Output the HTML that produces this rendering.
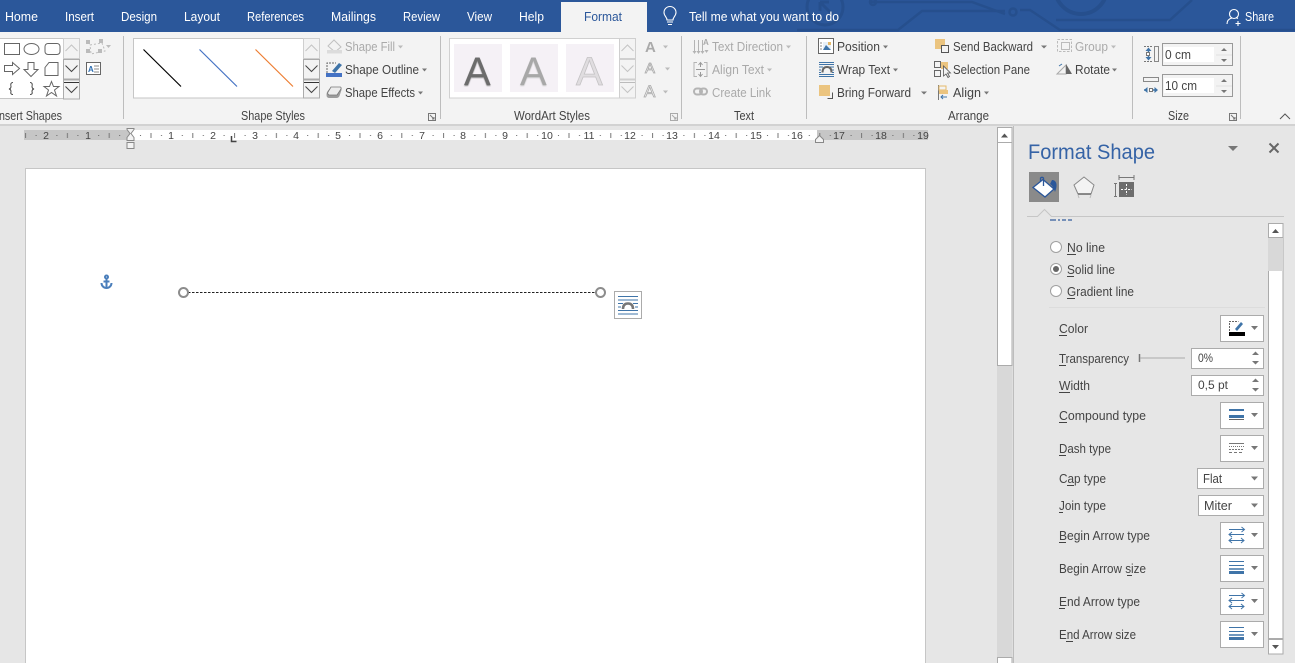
<!DOCTYPE html>
<html><head><meta charset="utf-8"><title>Format Shape</title>
<style>
html,body{margin:0;padding:0;width:1295px;height:663px;overflow:hidden;background:#e6e6e6}
svg{display:block;font-family:"Liberation Sans",sans-serif}
text{font-size:12.5px;fill:#444;white-space:pre}
.t{font-size:13px;fill:#fff}
.g{fill:#aaa}
.r{font-size:10.500px;fill:#444;text-anchor:middle}
.u{stroke:#444;stroke-width:1}
.n{fill:none;stroke:#666;stroke-width:1}
.cp{fill:#777}
.cd{fill:#bbb}
.sep{stroke:#bdbdbd;stroke-width:1}
</style></head><body>
<svg width="1295" height="663" viewBox="0 0 1295 663" xmlns="http://www.w3.org/2000/svg">
<defs>
<pattern id="rt" x="0" y="0" width="41.8" height="20" patternUnits="userSpaceOnUse" patternTransform="translate(130,130)">
<rect x="10" y="5" width="1" height="1" fill="#666"/><rect x="20.500" y="3" width="1" height="5" fill="#777"/><rect x="31" y="5" width="1" height="1" fill="#666"/>
</pattern>
<g id="btn"><rect x=".5" y=".5" width="43" height="26" fill="#fff" stroke="#ababab"/><path d="M31 11h7l-3.500 4z" fill="#777"/></g>
<g id="spin"><path d="M0 3l3.500-3.500 3.500 3.500zM0 9l3.500 3.500 3.500-3.500z" fill="#777"/></g>
<g id="sz"><path d="M9 6.500h15M9 10.500h15" stroke="#3f74a8"/><path d="M9 14h15" stroke="#3f74a8" stroke-width="1.500"/><path d="M9 17.500h15" stroke="#3f74a8" stroke-width="3"/></g>
<g id="arr" fill="none" stroke="#3f74a8"><path d="M9 7.500h15M21.500 5l3 2.500-3 2.500"/><path d="M9 12.500h15M12 10l-3 2.500 3 2.500"/><path d="M9 18.500h15M12 16l-3 2.500 3 2.500M21 16l3 2.500-3 2.500"/></g>
<filter id="bl" x="-20%" y="-20%" width="140%" height="140%"><feGaussianBlur stdDeviation=".5"/></filter>
</defs>

<!-- title bar -->
<rect width="1295" height="32" fill="#2b579a"/>
<g fill="none" stroke="#264f8d" stroke-width="2.500">
<path d="M797 30H898L922 11H1005"/>
<path d="M870 2H972L1005 14"/>
<circle cx="825" cy="7" r="18" stroke-width="3"/>
<path d="M820 2L832 14M820 2h9M820 2v9" stroke-width="3"/>
<path d="M1020 10H1030L1060 30H1295"/>
<circle cx="1081" cy="-12" r="26" stroke-width="4"/>
<path d="M1056 20H1170L1192 0"/>
<circle cx="1013" cy="12" r="3.500"/>
<circle cx="873" cy="2" r="3"/>
</g>
<text class="t" x="5" y="21" textLength="33" lengthAdjust="spacingAndGlyphs">Home</text>
<text class="t" x="65" y="21" textLength="29" lengthAdjust="spacingAndGlyphs">Insert</text>
<text class="t" x="121" y="21" textLength="36" lengthAdjust="spacingAndGlyphs">Design</text>
<text class="t" x="184" y="21" textLength="36" lengthAdjust="spacingAndGlyphs">Layout</text>
<text class="t" x="247" y="21" textLength="57" lengthAdjust="spacingAndGlyphs">References</text>
<text class="t" x="331" y="21" textLength="45" lengthAdjust="spacingAndGlyphs">Mailings</text>
<text class="t" x="403" y="21" textLength="37" lengthAdjust="spacingAndGlyphs">Review</text>
<text class="t" x="467" y="21" textLength="25" lengthAdjust="spacingAndGlyphs">View</text>
<text class="t" x="519" y="21" textLength="25" lengthAdjust="spacingAndGlyphs">Help</text>
<rect x="561" y="2" width="86" height="31" fill="#f3f3f3"/>
<text class="t" x="584" y="21" textLength="38" lengthAdjust="spacingAndGlyphs" style="fill:#2b579a">Format</text>
<g fill="none" stroke="#fff" stroke-width="1.100"><path d="M667 20c0-3-3-4-3-7.500a6 6 0 0 1 12 0c0 3.500-3 4.500-3 7.500z"/><path d="M667 22h6M668 24.500h4"/></g>
<text class="t" x="689" y="21" textLength="150" lengthAdjust="spacingAndGlyphs">Tell me what you want to do</text>
<g fill="none" stroke="#fff" stroke-width="1.100"><circle cx="1234" cy="14" r="4.500"/><path d="M1227 24c0-4 3-5.500 5-6M1236 17.500l2 1"/><path d="M1238 21v5M1235.500 23.500h5"/></g>
<text class="t" x="1245" y="21" textLength="29" lengthAdjust="spacingAndGlyphs">Share</text>

<!-- ribbon -->
<rect y="32" width="1295" height="92" fill="#f3f3f3"/>
<rect y="124" width="1295" height="2" fill="#d2d2d2"/>
<path class="sep" d="M123.500 36v83M440.500 36v83M681.500 36v83M806.500 36v83M1132.500 36v83M1240.500 36v83"/>

<!-- shapes gallery -->
<rect x="-2" y="38.500" width="65.500" height="60" fill="#fff" stroke="#c6c6c6"/>
<g class="n">
<rect x="4.500" y="43.500" width="15" height="11"/>
<ellipse cx="31.500" cy="49" rx="7.500" ry="5.500"/>
<rect x="45" y="43.500" width="15" height="11" rx="3"/>
<path d="M4.500 65.500h8v-3l7 6-7 6v-3h-8z"/>
<path d="M28 62.500h6v7h4l-7 7-7-7h4z"/>
<path d="M49 62.500h9v13h-13v-8z"/>
<path d="M13 82.500q-3 0-2 4q0 2-2 2.500q2 .5 2 2.500q-1 3 2 3" stroke="#444"/>
<path d="M30 82.500q3 0 2 4q0 2 2 2.500q-2 .5-2 2.500q1 3-2 3" stroke="#444"/>
<path d="M51.500 81.500l2 5h5.500l-4.500 3.500 2 6-5-3.500-5 3.500 2-6-4.500-3.500h5.500z"/>
</g>
<g stroke="#ababab" fill="#f3f3f3"><rect x="63.500" y="38.500" width="16" height="20" stroke="#cfcfcf"/><rect x="63.500" y="59.500" width="16" height="19.500"/><rect x="63.500" y="80" width="16" height="19"/></g>
<path d="M65.500 51l6-6 6 6" fill="none" stroke="#c4c4c4"/><path d="M65.500 65.500l6 6 6-6" fill="none" stroke="#444"/><path d="M64 82.500h15" stroke="#333"/><path d="M65.500 86.500l6 6 6-6" fill="none" stroke="#444"/>
<g fill="none" stroke="#bbb"><path d="M90 45l12-2 3 8-14 3z" stroke-dasharray="2 2"/></g>
<g fill="#bbb"><rect x="86" y="40" width="4" height="4"/><rect x="99" y="39" width="4" height="4"/><rect x="86" y="49" width="4" height="4"/><rect x="98" y="49" width="4" height="4"/></g>
<path d="M106 45h5l-2.500 3z" class="cd"/>
<rect x="86.500" y="62.500" width="14" height="12" fill="#fff" stroke="#666"/><text x="88" y="72" style="font-size:8px;font-weight:bold;fill:#2b6cb0">A</text><path d="M94 66h5M94 69h5M94 72h5" stroke="#888"/>
<text x="-4" y="120" textLength="66" lengthAdjust="spacingAndGlyphs">Insert Shapes</text>

<!-- shape styles -->
<rect x="133.500" y="38.500" width="170" height="59.500" fill="#fff" stroke="#c6c6c6"/>
<path d="M143.500 49.500l37.500 37" stroke="#000" stroke-width="1.200"/>
<path d="M199.500 49.500l37.500 37" stroke="#4472c4" stroke-width="1.200"/>
<path d="M255.500 49.500l37.500 37" stroke="#ed7d31" stroke-width="1.200"/>
<g stroke="#ababab" fill="#f3f3f3"><rect x="303.500" y="38.500" width="16" height="20" stroke="#cfcfcf"/><rect x="303.500" y="59.500" width="16" height="19.500"/><rect x="303.500" y="80" width="16" height="18"/></g>
<path d="M305.500 51l6-6 6 6" fill="none" stroke="#c4c4c4"/><path d="M305.500 65.500l6 6 6-6" fill="none" stroke="#444"/><path d="M304 82.500h15" stroke="#333"/><path d="M305.500 86.500l6 6 6-6" fill="none" stroke="#444"/>
<path d="M328 46l6-6 7 7-6 5z" fill="#f3f3f3" stroke="#c0c0c0"/><rect x="327" y="50" width="15" height="3.500" fill="#dcdcdc"/>
<text class="g" x="345" y="51" textLength="50" lengthAdjust="spacingAndGlyphs">Shape Fill</text><path d="M398 45.500h5l-2.500 3z" class="cd"/>
<path d="M327 73v-10h9" fill="none" stroke="#666" stroke-dasharray="2 1"/><path d="M332 71l7-8 3 2-7 8z" fill="#3f74a8"/><rect x="326" y="73" width="16" height="4" fill="#4472c4"/>
<text x="345" y="74" textLength="74" lengthAdjust="spacingAndGlyphs">Shape Outline</text><path d="M422 68.500h5l-2.500 3z" class="cp"/>
<path d="M331 87h9q2 0 1.500 3l-2 6q-1 2-3 2h-7q-3 0-3-3t2-5z" fill="#9c9c9c"/><path d="M331 87h9q1.500 0 1 2l-4 6h-8q-2-1-1-3z" fill="#ececec" stroke="#777" stroke-width=".8"/>
<text x="345" y="97" textLength="70" lengthAdjust="spacingAndGlyphs">Shape Effects</text><path d="M418 91.500h5l-2.500 3z" class="cp"/>
<text x="241" y="120" textLength="64" lengthAdjust="spacingAndGlyphs">Shape Styles</text>
<path d="M428.500 113.500h7v7h-7zM430 115l4 4M434 117v2h-2" fill="none" stroke="#777"/>

<!-- wordart -->
<rect x="449.500" y="38.500" width="170" height="59.500" fill="#fff" stroke="#d0d0d0"/>
<rect x="454" y="44" width="48" height="48" fill="#f5f1f6"/><rect x="510" y="44" width="48" height="48" fill="#f5f1f6"/><rect x="566" y="44" width="48" height="48" fill="#f5f1f6"/>
<text x="464" y="85" style="font-size:40px;fill:#888" filter="url(#bl)" transform="translate(0,1)">A</text>
<text x="464" y="85" style="font-size:40px;fill:#6c6c6c">A</text>
<text x="520" y="85" style="font-size:40px;fill:#c2c2c2" filter="url(#bl)" transform="translate(0,1)">A</text>
<text x="520" y="85" style="font-size:40px;fill:#a8a8a8">A</text>
<text x="576" y="85" style="font-size:40px;fill:#e0dde0;stroke:#c4c2c4;stroke-width:.8">A</text>
<g stroke="#cfcfcf" fill="#f3f3f3"><rect x="619.500" y="38.500" width="16" height="20"/><rect x="619.500" y="59.500" width="16" height="19.500"/><rect x="619.500" y="80" width="16" height="18"/></g>
<path d="M621.500 51l6-6 6 6M621.500 65.500l6 6 6-6M621.500 86.500l6 6 6-6" fill="none" stroke="#c4c4c4"/><path d="M620 82.500h15" stroke="#bbb"/>
<text x="645" y="52" style="font-size:15px;font-weight:bold;fill:#aaa">A</text><path d="M663 45.500h5l-2.500 3z" class="cd"/>
<text x="645" y="73" style="font-size:15px;fill:#f3f3f3;stroke:#aaa;stroke-width:.8">A</text><path d="M665 67.500h5l-2.500 3z" class="cd"/>
<text x="644" y="97" style="font-size:17px;fill:#f3f3f3;stroke:#aaa;stroke-width:.8">A</text><path d="M663 90.500h5l-2.500 3z" class="cd"/>
<text x="514" y="120" textLength="76" lengthAdjust="spacingAndGlyphs">WordArt Styles</text>
<path d="M670.500 113.500h7v7h-7zM672 115l4 4M676 117v2h-2" fill="none" stroke="#aaa"/>

<!-- text -->
<g stroke="#b4b4b4" fill="none"><path d="M694.500 40v12M698.500 40v12M702.500 40v12"/></g>
<text x="703" y="45" style="font-size:8px;font-weight:bold;fill:#aaa">A</text>
<path d="M692.500 51l2 3 2-3zM696.500 51l2 3 2-3zM700.500 51l2 3 2-3zM704.500 50l2 3 2-3z" fill="#b4b4b4"/>
<text class="g" x="712" y="51" textLength="71" lengthAdjust="spacingAndGlyphs">Text Direction</text><path d="M786 45.500h5l-2.500 3z" class="cd"/>
<path d="M697 62.500h-3v14h3M704 62.500h3v14h-3" fill="none" stroke="#b4b4b4"/><path d="M700.500 63v4M700.500 72v4M698.500 65l2-2.500 2 2.500M698.500 74l2 2.500 2-2.500M696 69.500h9" fill="none" stroke="#999"/>
<text class="g" x="712" y="74" textLength="52" lengthAdjust="spacingAndGlyphs">Align Text</text><path d="M767 68.500h5l-2.500 3z" class="cd"/>
<rect x="694" y="88.500" width="8" height="6" rx="3" fill="none" stroke="#b4b4b4" stroke-width="2"/><rect x="700" y="88.500" width="7" height="6" rx="3" fill="none" stroke="#b4b4b4" stroke-width="2"/>
<text class="g" x="712" y="97" textLength="59" lengthAdjust="spacingAndGlyphs">Create Link</text>
<text x="734" y="120" textLength="20" lengthAdjust="spacingAndGlyphs">Text</text>

<!-- arrange -->
<rect x="818.500" y="38.500" width="15" height="15" fill="#fff" stroke="#666"/><rect x="823" y="42" width="8" height="8" fill="#e8f0f8"/><path d="M823 50l3-5 5 5z" fill="#3f74a8"/><rect x="828" y="42" width="3" height="3" fill="#e5b969"/><path d="M820 43h2M820 46h2M820 49h2" stroke="#888"/>
<text x="837" y="51" textLength="43" lengthAdjust="spacingAndGlyphs">Position</text><path d="M883 45.500h5l-2.500 3z" class="cp"/>
<path d="M819 62.500h15M819 64.500h15M819 74.500h15M819 76.500h15M819 67h4M830 67h4M819 70h2M832 70h2M819 72.500h2M832 72.500h2" stroke="#3f74a8"/><path d="M822.500 72.500q0-5.500 4.500-5.500t4.500 5.500" fill="none" stroke="#666" stroke-width="2"/>
<text x="837" y="74" textLength="53" lengthAdjust="spacingAndGlyphs">Wrap Text</text><path d="M893 68.500h5l-2.500 3z" class="cp"/>
<rect x="819" y="85" width="11" height="11" fill="#ebc47f"/><path d="M832.500 92.500v6h-5" fill="none" stroke="#555"/>
<text x="837" y="97" textLength="74" lengthAdjust="spacingAndGlyphs">Bring Forward</text><path d="M921 91.500h6l-3 3z" class="cp"/>
<rect x="935" y="39" width="10" height="10" fill="#ebc47f"/><rect x="941.500" y="45.500" width="7" height="7" fill="#f3f3f3" stroke="#555"/>
<text x="953" y="51" textLength="80" lengthAdjust="spacingAndGlyphs">Send Backward</text><path d="M1041 45.500h6l-3 3z" class="cp"/>
<rect x="934.500" y="61.500" width="6" height="6" fill="none" stroke="#666"/><rect x="934.500" y="70.500" width="6" height="6" fill="none" stroke="#666"/><rect x="941" y="62" width="7" height="7" fill="#ebc47f"/><path d="M943.500 66v10l2.500-2 2 3.500 1.500-1-2-3.500h3z" fill="#f3f3f3" stroke="#555" stroke-width=".8"/>
<text x="953" y="74" textLength="77" lengthAdjust="spacingAndGlyphs">Selection Pane</text>
<path d="M938.500 85v15" stroke="#777"/><rect x="939" y="86" width="7" height="4" fill="#f3f3f3" stroke="#e5b969"/><rect x="939" y="90" width="9" height="4" fill="#ebc47f"/><path d="M947 97h-6M943 95l-2 2 2 2" fill="none" stroke="#3f74a8"/>
<text x="953" y="97" textLength="28" lengthAdjust="spacingAndGlyphs">Align</text><path d="M984 91.500h5l-2.500 3z" class="cp"/>
<rect x="1057.500" y="39.500" width="14" height="12" fill="none" stroke="#bbb" stroke-dasharray="2.500 1.500"/><rect x="1061.500" y="42.500" width="8" height="7" fill="none" stroke="#bbb"/>
<text class="g" x="1075" y="51" textLength="33" lengthAdjust="spacingAndGlyphs">Group</text><path d="M1111 45.500h5l-2.500 3z" class="cd"/>
<path d="M1057 74l9-9v9z" fill="none" stroke="#aaa"/><path d="M1066 64l6 10h-6z" fill="#666"/><path d="M1059 66l3-2" stroke="#3f74a8"/>
<text x="1075" y="74" textLength="35" lengthAdjust="spacingAndGlyphs">Rotate</text><path d="M1112 68.500h5l-2.500 3z" class="cp"/>
<text x="948" y="120" textLength="41" lengthAdjust="spacingAndGlyphs">Arrange</text>

<!-- size -->
<rect x="1154.500" y="46.500" width="4" height="15" fill="#f3f3f3" stroke="#888"/>
<path d="M1144 46.500h8M1144 61.500h8" stroke="#777" stroke-dasharray="2 1"/><path d="M1145.500 51l3-3.500 3 3.500zM1145.500 57l3 3.500 3-3.500z" fill="#3f74a8"/><path d="M1148.500 50v8" stroke="#3f74a8" stroke-width="1.500"/><rect x="1146.500" y="52.500" width="3" height="3" fill="#fff" stroke="#777"/>
<rect x="1162.500" y="43.500" width="70" height="22" fill="#f3f3f3" stroke="#999"/><rect x="1164" y="47" width="50" height="15" fill="#fff"/>
<text x="1165" y="59" textLength="26" lengthAdjust="spacingAndGlyphs">0 cm</text>
<path d="M1221 51h6l-3-3zM1221 59h6l-3 3z" class="cp"/><path d="M1216 55h16" stroke="#e0e0e0"/>
<rect x="1143.500" y="77.500" width="15" height="4" fill="#f3f3f3" stroke="#888"/>
<path d="M1144 90h14" stroke="#3f74a8" stroke-width="1.500" stroke-dasharray="3 5"/><path d="M1147.500 87l-3.500 3 3.500 3zM1154.500 87l3.500 3-3.500 3z" fill="#3f74a8"/><rect x="1149.500" y="88.500" width="3" height="3" fill="#fff" stroke="#777"/>
<rect x="1162.500" y="74.500" width="70" height="22" fill="#f3f3f3" stroke="#999"/><rect x="1164" y="78" width="50" height="15" fill="#fff"/>
<text x="1165" y="90" textLength="32" lengthAdjust="spacingAndGlyphs">10 cm</text>
<path d="M1221 82h6l-3-3zM1221 90h6l-3 3z" class="cp"/><path d="M1216 86h16" stroke="#e0e0e0"/>
<text x="1168" y="120" textLength="21" lengthAdjust="spacingAndGlyphs">Size</text>
<path d="M1229.500 113.500h7v7h-7zM1231 115l4 4M1235 117v2h-2" fill="none" stroke="#777"/>
<path d="M1280 119l5-5 5 5" fill="none" stroke="#555"/>

<!-- ruler -->
<rect x="24" y="130" width="106" height="10" fill="#c6c6c6"/>
<rect x="130" y="130" width="687" height="10" fill="#fff"/>
<rect x="817" y="130" width="111" height="10" fill="#c6c6c6"/>
<rect x="24" y="130" width="904" height="10" fill="url(#rt)"/>
<g>
<rect x="41" y="131" width="10" height="9" fill="#c6c6c6"/><rect x="83" y="131" width="10" height="9" fill="#c6c6c6"/>
<text class="r" x="46" y="139">2</text><text class="r" x="88" y="139">1</text>
<text class="r" x="171" y="139">1</text><text class="r" x="213" y="139">2</text><text class="r" x="255" y="139">3</text><text class="r" x="296" y="139">4</text><text class="r" x="338" y="139">5</text><text class="r" x="380" y="139">6</text><text class="r" x="422" y="139">7</text><text class="r" x="463" y="139">8</text><text class="r" x="505" y="139">9</text><text class="r" x="547" y="139">10</text><text class="r" x="589" y="139">11</text><text class="r" x="630" y="139">12</text><text class="r" x="672" y="139">13</text><text class="r" x="714" y="139">14</text><text class="r" x="756" y="139">15</text><text class="r" x="797" y="139">16</text><text class="r" x="839" y="139">17</text><text class="r" x="881" y="139">18</text><text class="r" x="923" y="139">19</text>
</g>
<path d="M127 128.500h7v1l-3 4 3 4v3h-7v-3l3-4-3-4z" fill="#f3f3f3" stroke="#888"/>
<rect x="127" y="142.500" width="7" height="6" fill="#f3f3f3" stroke="#888"/>
<path d="M231.500 136v5.500h5" fill="none" stroke="#444" stroke-width="1.500"/>
<path d="M815.500 142.500v-3l4-4 4 4v3z" fill="#f3f3f3" stroke="#888"/>

<!-- main scrollbar -->
<rect x="997" y="127" width="15.500" height="536" fill="#d8d8d8"/>
<rect x="997.500" y="127.500" width="14.500" height="15" fill="#fff" stroke="#ababab"/><path d="M1001 137.500h7l-3.500-4z" fill="#555"/>
<rect x="997.500" y="142.500" width="14.500" height="223" fill="#fff" stroke="#ababab"/>
<rect x="997.500" y="657.500" width="14.500" height="8" fill="#fff" stroke="#ababab"/>
<path class="sep" d="M1013.500 126v537"/>

<!-- page -->
<rect x="25.500" y="168.500" width="900" height="500" fill="#fff" stroke="#c6c6c6"/>
<g fill="none" stroke="#4a7ebb" stroke-width="2"><circle cx="106.500" cy="277" r="1.500"/><path d="M106.500 279v9M101.500 283c0 3 2.500 5 5 5s5-2 5-5M103.500 281.500h6"/></g>
<path d="M188 292.500H596" stroke="#222" stroke-dasharray="2.500 1.500"/>
<circle cx="183.500" cy="292.500" r="4.500" fill="#fff" stroke="#8c8c8c" stroke-width="2"/>
<circle cx="600.500" cy="292.500" r="4.500" fill="#fff" stroke="#8c8c8c" stroke-width="2"/>
<rect x="614.500" y="291.500" width="27" height="27" fill="#fff" stroke="#ababab"/>
<path d="M618 296.500h20M618 300h20M618 303.500h5M633 303.500h5M618 307h3M635 307h3M618 310.500h20M618 314h20" stroke="#3f74a8"/>
<path d="M623 309q0-5.500 5-5.500t5 5.500" fill="none" stroke="#777" stroke-width="2.500"/>

<!-- pane -->
<text x="1028" y="159" style="font-size:21px;fill:#3563a6" textLength="127" lengthAdjust="spacingAndGlyphs">Format Shape</text>
<path d="M1228 146h10l-5 5z" fill="#777"/>
<path d="M1269.500 143.500l9 9M1278.500 143.500l-9 9" stroke="#666" stroke-width="2"/>
<rect x="1029" y="172" width="30" height="30" fill="#8a8a8a"/>
<path d="M1052 180c4.500 0 6 5 3 12-1-3-2-6-5-8z" fill="#2b579a"/>
<path d="M1043 179.500l11 9.500-9 8-12-9.500z" fill="#fff" stroke="#2b579a" stroke-width="1.300"/>
<path d="M1043.500 186v-8a2 2 0 0 0-3 0v3" fill="none" stroke="#2b579a" stroke-width="1.300"/>
<path d="M1084 177l10 8-3 9h-13l-4-9z" fill="#f3f3f3" stroke="#888"/><path d="M1078 194h13" stroke="#666" stroke-width="1.500"/><path d="M1078 195l1 3M1091 195l-1 3" stroke="#bbb"/>
<path d="M1119 177.500h15M1119 175v5M1134 175v5M1114 183.500h3M1114 196.500h3M1115.500 183.500v13" fill="none" stroke="#777"/>
<rect x="1119" y="182" width="15" height="15" fill="#6d6d6d"/><path d="M1126.500 184v11M1121 189.500h11" stroke="#fff" stroke-dasharray="2 1.500"/>
<path d="M1027 216.500H1037.500L1044.500 209.500L1051.500 216.500H1284" fill="none" stroke="#c6c6c6"/>
<rect x="1040" y="215" width="9" height="3" fill="#e6e6e6"/>
<path d="M1050 220h6M1058 220h2M1062 220h4M1068 220h4" stroke="#2b579a" stroke-opacity=".8" stroke-width="1.500"/>

<!-- pane scrollbar -->
<rect x="1268.500" y="238" width="14.500" height="400.500" fill="#fff" stroke="#ababab"/>
<rect x="1268" y="238" width="15" height="33" fill="#d8d8d8"/>
<rect x="1268.500" y="223.500" width="14.500" height="14" fill="#fff" stroke="#ababab"/><path d="M1272 233h7l-3.500-4z" fill="#555"/>
<rect x="1268.500" y="639.500" width="14.500" height="14.500" fill="#fff" stroke="#ababab"/><path d="M1272 645h7l-3.500 4z" fill="#555"/>

<!-- radios -->
<g fill="#fff" stroke="#a0a0a0"><circle cx="1056" cy="247" r="5.500"/><circle cx="1056" cy="269" r="5.500"/><circle cx="1056" cy="291" r="5.500"/></g>
<circle cx="1056" cy="269" r="3" fill="#666"/>
<text x="1067" y="252" textLength="38" lengthAdjust="spacingAndGlyphs">No line</text><path class="u" d="M1067 254.500h9"/>
<text x="1067" y="274" textLength="48" lengthAdjust="spacingAndGlyphs">Solid line</text><path class="u" d="M1067 276.500h7"/>
<text x="1067" y="296" textLength="67" lengthAdjust="spacingAndGlyphs">Gradient line</text><path class="u" d="M1067 298.500h8"/>
<path d="M1049 307.500h216" stroke="#dcdcdc"/>

<!-- rows -->
<text x="1059" y="333" textLength="29" lengthAdjust="spacingAndGlyphs">Color</text><path class="u" d="M1059 335.500h8"/>
<use href="#btn" x="1220" y="315"/>
<path d="M1229.500 331v-9.500h9" fill="none" stroke="#666" stroke-dasharray="2 1"/><path d="M1235 329l6-7 2 2-6 7z" fill="#3f74a8"/><rect x="1229" y="332" width="16" height="4" fill="#000"/>

<text x="1059" y="363" textLength="70" lengthAdjust="spacingAndGlyphs">Transparency</text><path class="u" d="M1059 365.500h7"/>
<path d="M1139.500 354v8" stroke="#777" stroke-width="1.500"/><path d="M1140 358h45" stroke="#aaa"/>
<rect x="1191.500" y="348.500" width="72" height="20" fill="#fff" stroke="#ababab"/><text x="1198" y="362" textLength="15" lengthAdjust="spacingAndGlyphs" style="font-size:12px">0%</text><use href="#spin" x="1252" y="352"/>

<text x="1059" y="390" textLength="31" lengthAdjust="spacingAndGlyphs">Width</text><path class="u" d="M1059 392.500h11"/>
<rect x="1191.500" y="375.500" width="72" height="20" fill="#fff" stroke="#ababab"/><text x="1198" y="389" textLength="30" lengthAdjust="spacingAndGlyphs" style="font-size:12px">0,5 pt</text><use href="#spin" x="1252" y="379"/>

<text x="1059" y="420" textLength="87" lengthAdjust="spacingAndGlyphs">Compound type</text><path class="u" d="M1059 422.500h8"/>
<use href="#btn" x="1220" y="402"/>
<path d="M1229 410h15" stroke="#3f74a8" stroke-width="2"/><path d="M1229 416.500h15" stroke="#3f74a8" stroke-width="3"/><path d="M1229 419.500h15" stroke="#666"/>

<text x="1059" y="453" textLength="52" lengthAdjust="spacingAndGlyphs">Dash type</text><path class="u" d="M1059 455.500h7"/>
<use href="#btn" x="1220" y="435"/>
<path d="M1229 443.500h15" stroke="#777"/><path d="M1229 446.500h15" stroke="#777" stroke-dasharray="1 1"/><path d="M1229 449.500h15" stroke="#777" stroke-dasharray="2 1"/><path d="M1229 452.500h15" stroke="#777" stroke-dasharray="3 2"/>

<text x="1059" y="483" textLength="47" lengthAdjust="spacingAndGlyphs">Cap type</text><path class="u" d="M1067 485.500h7"/>
<rect x="1197.500" y="468.500" width="66" height="20" fill="#fff" stroke="#ababab"/><text x="1203" y="483" textLength="19" lengthAdjust="spacingAndGlyphs">Flat</text><path d="M1251 476.500h7l-3.500 4z" fill="#777"/>

<text x="1059" y="510" textLength="47" lengthAdjust="spacingAndGlyphs">Join type</text><path class="u" d="M1059 512.500h4"/>
<rect x="1198.500" y="495.500" width="65" height="20" fill="#fff" stroke="#ababab"/><text x="1204" y="510" textLength="28" lengthAdjust="spacingAndGlyphs">Miter</text><path d="M1251 503.500h7l-3.500 4z" fill="#777"/>

<text x="1059" y="540" textLength="91" lengthAdjust="spacingAndGlyphs">Begin Arrow type</text><path class="u" d="M1059 542.500h7"/>
<use href="#btn" x="1220" y="522"/><use href="#arr" x="1220" y="522"/>

<text x="1059" y="573" textLength="87" lengthAdjust="spacingAndGlyphs">Begin Arrow size</text><path class="u" d="M1127 575.500h5"/>
<use href="#btn" x="1220" y="555"/><use href="#sz" x="1220" y="555"/>

<text x="1059" y="606" textLength="81" lengthAdjust="spacingAndGlyphs">End Arrow type</text><path class="u" d="M1059 608.500h6"/>
<use href="#btn" x="1220" y="588"/><use href="#arr" x="1220" y="588"/>

<text x="1059" y="639" textLength="77" lengthAdjust="spacingAndGlyphs">End Arrow size</text><path class="u" d="M1066 641.500h7"/>
<use href="#btn" x="1220" y="621"/><use href="#sz" x="1220" y="621"/>
</svg>
</body></html>
